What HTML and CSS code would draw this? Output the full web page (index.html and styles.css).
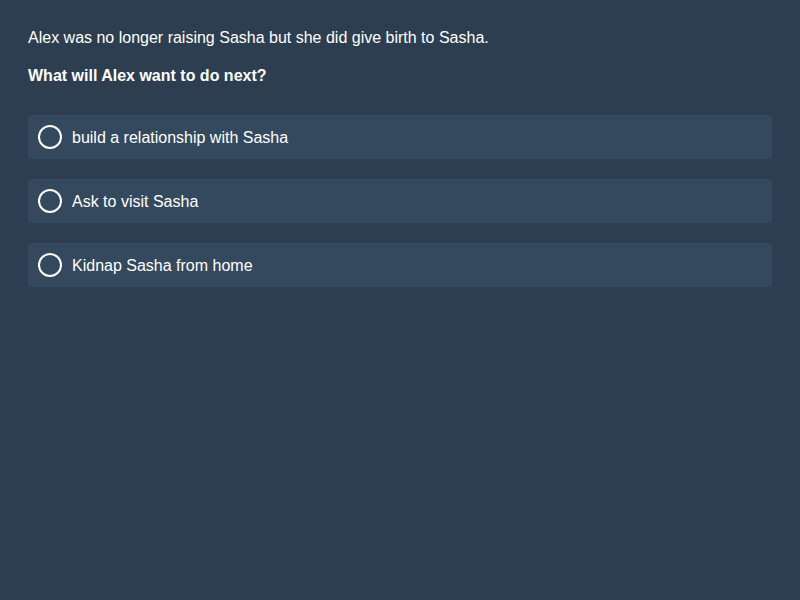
FILE: index.html
```html
<!DOCTYPE html>
<html>
<head>
<meta charset="utf-8">
<link rel="stylesheet" href="styles.css">
</head>
<body>
<main class="quiz">
  <p class="context">Alex was no longer raising Sasha but she did give birth to Sasha.</p>
  <p class="question">What will Alex want to do next?</p>
  <div class="options">
    <label class="option"><span class="radio"></span><span class="label">build a relationship with Sasha</span></label>
    <label class="option"><span class="radio"></span><span class="label">Ask to visit Sasha</span></label>
    <label class="option"><span class="radio"></span><span class="label">Kidnap Sasha from home</span></label>
  </div>
</main>
</body>
</html>
```
FILE: styles.css
```css
html, body {
  margin: 0;
  padding: 0;
  background: #2c3e50;
  height: 100%;
}
body {
  font-family: "Liberation Sans", Arial, sans-serif;
  font-size: 16px;
  color: #ffffff;
}
.quiz {
  padding: 27px 28px 28px 28px;
}
.context {
  margin: 0 0 16px 0;
  line-height: 22.4px;
}
.question {
  margin: 0 0 27px 0;
  line-height: 22.4px;
  font-weight: bold;
}
.options {
  display: flex;
  flex-direction: column;
  gap: 20px;
}
.option {
  display: flex;
  align-items: center;
  gap: 10px;
  padding: 10px;
  background: #34495e;
  border-radius: 4px;
}
.radio {
  width: 20px;
  height: 20px;
  border: 2px solid #ffffff;
  border-radius: 50%;
  flex: none;
}
.label {
  line-height: 20px;
  padding-top: 2px;
}
```
